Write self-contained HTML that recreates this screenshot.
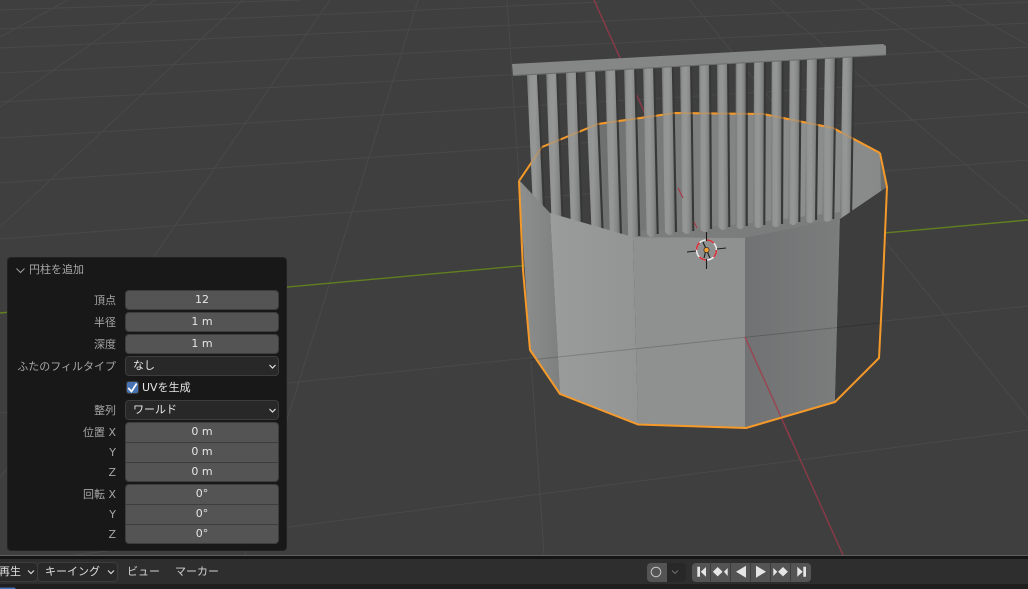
<!DOCTYPE html>
<html lang="ja"><head><meta charset="utf-8"><title>Blender</title>
<style>
*{box-sizing:border-box}
html,body{margin:0;padding:0;width:1028px;height:589px;overflow:hidden;background:#3f3f3f}
body{position:relative;font-family:"DejaVu Sans","Noto Sans CJK JP",sans-serif;font-size:11px}
svg{position:absolute;left:0;top:0}
.a{position:absolute;white-space:nowrap}
#panel{left:7px;top:257px;width:280px;height:294px;background:#181818;border:1px solid #222;border-radius:4px}
.l{position:absolute;right:912px;text-align:right;color:#a6a6a6;font-size:11px;line-height:19px;white-space:nowrap}
.f{position:absolute;left:125px;width:154px;height:20px;background:#545454;border:1px solid #3d3d3d;border-radius:4px;color:#e6e6e6;text-align:center;line-height:18px;font-size:11px}
.g{position:absolute;left:125px;width:154px;background:#545454;border:1px solid #3d3d3d;border-radius:4px;color:#e6e6e6;text-align:center;font-size:11px}
.g div{height:20px;line-height:18px;border-bottom:1px solid #3d3d3d}
.g div:last-child{border-bottom:0}
.s{position:absolute;left:125px;width:154px;height:20px;background:#282828;border:1px solid #3d3d3d;border-radius:4px;color:#e6e6e6;padding-left:7px;line-height:18px;font-size:11px}
.t{position:absolute;color:#d2d2d2;font-size:11px;line-height:18px;white-space:nowrap}
</style></head><body>
<svg width="1028" height="589" viewBox="0 0 1028 589">
<defs>
<linearGradient id="c" x1="0" x2="1" y1="0" y2="0">
<stop offset="0" stop-color="#747676"/><stop offset=".2" stop-color="#929494"/><stop offset=".5" stop-color="#959797"/><stop offset=".8" stop-color="#858787"/><stop offset="1" stop-color="#6c6e6e"/>
</linearGradient>
<linearGradient id="b" gradientUnits="userSpaceOnUse" x1="598" x2="887" y1="0" y2="0">
<stop offset="0" stop-color="#6e6f6f"/><stop offset=".3" stop-color="#7c7d7d"/><stop offset=".7" stop-color="#8c8d8d"/><stop offset="1" stop-color="#888989"/>
</linearGradient>
<linearGradient id="f1" gradientUnits="userSpaceOnUse" x1="520" x2="558" y1="0" y2="0">
<stop offset="0" stop-color="#8d8f8f"/><stop offset="1" stop-color="#7f8181"/>
</linearGradient>
<linearGradient id="f2" gradientUnits="userSpaceOnUse" x1="550" x2="636" y1="0" y2="0">
<stop offset="0" stop-color="#9a9c9c"/><stop offset="1" stop-color="#939595"/>
</linearGradient>
<linearGradient id="f4" gradientUnits="userSpaceOnUse" x1="745" x2="840" y1="0" y2="0">
<stop offset="0" stop-color="#717273"/><stop offset="1" stop-color="#7b7c7c"/>
</linearGradient>
</defs>
<rect width="1028" height="556" fill="#3f3f3f"/>
<g stroke="#494949" stroke-width="1" fill="none">
<path d="M0 239L1028 160M0 183L1028 112M0 138L1028 76M0 102L1028 47M0 73L1028 23M0 48L1028 2M0 29L600 2M0 10L300 0"/>
<path d="M0 413L1028 306M0 565L1028 430"/>
<path d="M507 0L544 555M418 0L245 555M330 0L100 335M243 0L0 227M155 0L0 107M68 0L0 37"/>
<path d="M857 0L1028 107M947 0L1028 45M770 0L1028 217M690 0L1028 418M0 478L7 468"/>
</g>
<path d="M0 313L1028 220" stroke="#617f1f" stroke-width="1.4" fill="none"/>
<path d="M594 0L843 555" stroke="#8a3a48" stroke-width="1.4" fill="none"/>

<polygon points="598,124 675,113 763,114 833,128 880,153 887,187 840,219 745,238 633,237 598,230" fill="url(#b)"/>
<polygon points="880,153 887,187 881,192" fill="#6d6e6e"/>
<polygon points="637,231 720,226 750,223 840,212 840,219 745,238 633,237" fill="#7b7c7c"/>
<polyline points="519,181 542,147 598,124 675,113 763,114 833,128 880,153" fill="none" stroke="#f59a2a" stroke-width="2"/>

<path d="M537.5 70L544 215M556.8 69L562.5 225M576.5 68L581.8 230M595.8 67L602.5 235M615.8 65.5L620.8 238M634.8 64.5L639 236M653.8 63.5L657.5 234M672.5 62.5L675.8 232M690.8 61L693 231M709.8 60L710.8 229M727.8 59L729 227M746.5 58L746.5 226M764.8 57L764 225M782.5 56L781.8 224M800.5 55L799 222M817.8 54L815.8 220M835.8 53L833 219M853.5 52L850.8 217" stroke="#373737" stroke-width="2.6" fill="none"/>
<g fill="url(#c)">
<path d="M526.7 70L533.3 215L543.3 215L536.7 70Z"/>
<path d="M546 69L551.7 225L561.7 225L556 69Z"/>
<path d="M565.7 68L571 230L581 230L575.7 68Z"/>
<path d="M585 67L591.7 235L601.7 235L595 67Z"/>
<path d="M605 65.5L610 238L620 238L615 65.5Z"/>
<path d="M624 64.5L628.3 240L638.3 240L634 64.5Z"/>
<path d="M643 63.5L646.7 234Q651.7 240 656.7 234L653 63.5Z"/>
<path d="M661.7 62.5L665 232Q670 238 675 232L671.7 62.5Z"/>
<path d="M680 61L682.3 231Q687.3 237 692.3 231L690 61Z"/>
<path d="M699 60L700 229Q705 235 710 229L709 60Z"/>
<path d="M717 59L718.3 227Q723.3 233 728.3 227L727 59Z"/>
<path d="M735.7 58L735.7 226Q740.7 232 745.7 226L745.7 58Z"/>
<path d="M754 57L753.3 225Q758.3 231 763.3 225L764 57Z"/>
<path d="M771.7 56L771 224Q776 230 781 224L781.7 56Z"/>
<path d="M789.7 55L788.3 222Q793.3 228 798.3 222L799.7 55Z"/>
<path d="M807 54L805 220Q810 226 815 220L817 54Z"/>
<path d="M825 53L822.3 219Q827.3 225 832.3 219L835 53Z"/>
<path d="M842.7 52L840 217Q845 223 850 217L852.7 52Z"/>
</g>
<path d="M678 188L683 198M694 222L697 228" stroke="#a63c4c" stroke-width="1.2" fill="none"/>
<polyline points="519,181 542,147 598,124 675,113 763,114 833,128 880,153" fill="none" stroke="#f59a2a" stroke-width="2" stroke-opacity=".35"/>
<polygon points="512,64 883,44 886,46 886,55 513,76" fill="#858686"/>
<path d="M513 75.5L886 55" stroke="#6a6b6b" stroke-width="1" fill="none"/>

<polygon points="519,180 550,213 560,394 530,350" fill="url(#f1)"/>
<polygon points="550,213 633,237 638,424 560,394" fill="url(#f2)"/>
<polygon points="633,237 745,238 745,428 638,424" fill="#8f9090"/>
<polygon points="745,238 840,219 835,402 745,428" fill="url(#f4)"/>
<polygon points="840,219 887,187 880,358 835,402" fill="#3d3d3d"/>
<path d="M530 360L880 323" stroke="#000" stroke-opacity=".18" stroke-width="1" fill="none"/>
<path d="M745 337L781 417" stroke="#a23c4a" stroke-opacity=".85" stroke-width="1.4" fill="none"/>
<path d="M781 417L791 440" stroke="#8a3a48" stroke-width="1.4" fill="none"/>
<polyline points="880,153 887,187 883,280 879,358 835,402 746,428 638,424.5 560,394 530,350 523,270 519,181" fill="none" stroke="#f59a2a" stroke-width="2" stroke-linejoin="round"/>

<g fill="none">
<circle cx="706.5" cy="250" r="10" stroke="#e9e9e9" stroke-width="1.6"/>
<circle cx="706.5" cy="250" r="10" stroke="#d9303a" stroke-width="1.6" stroke-dasharray="7.85 7.85"/>
<path d="M706.5 232V241M706.5 259V269M687 252L696 251M717 249L726 248M703 242L710 258M704 258L705.5 252" stroke="#1c1c1c" stroke-width="1.1"/>
</g>
<circle cx="706.5" cy="250" r="2.6" fill="#f5a030" stroke="#2a2a2a" stroke-width=".7"/>

<rect y="555" width="1028" height="1" fill="#5f5f5f"/>
<rect y="556" width="1028" height="3" fill="#151515"/>
<rect y="559" width="1028" height="25" fill="#2e2e2e"/>
<rect y="584" width="1028" height="5" fill="#1f1f1f"/>
<path d="M0 589V587.5H14Q15.5 587.5 15.7 589Z" fill="#4772b3"/>
</svg>

<div id="panel" class="a"></div>
<svg width="1028" height="589" viewBox="0 0 1028 589">
<path d="M16.5 268.5L20.5 272.5L24.5 268.5" stroke="#a0a0a0" stroke-width="1" fill="none"/>
</svg>
<div class="t" style="left:29px;top:261px;color:#a8a8a8">円柱を追加</div>
<div class="l" style="top:291px">頂点</div>
<div class="f" style="top:290px">12</div>
<div class="l" style="top:313px">半径</div>
<div class="f" style="top:312px">1 m</div>
<div class="l" style="top:335px">深度</div>
<div class="f" style="top:334px">1 m</div>
<div class="l" style="top:357px">ふたのフィルタイプ</div>
<div class="s" style="top:356px">なし</div>
<div class="a" style="left:125.5px;top:381px;width:13px;height:13px;background:#4772b3;border-radius:3px;border:1px solid #3d3d3d"></div>
<div class="t" style="left:142px;top:378.5px;color:#e6e6e6">UVを生成</div>
<div class="l" style="top:401px">整列</div>
<div class="s" style="top:400px">ワールド</div>
<svg width="1028" height="589" viewBox="0 0 1028 589">
<path d="M128.3 388L131.5 391.5L136.7 383.5" stroke="#fff" stroke-width="1.7" fill="none"/>
<path d="M269.5 409L272.5 412L275.5 409M269.5 365L272.5 368L275.5 365" stroke="#e0e0e0" stroke-width="1.2" fill="none"/>
</svg>
<div class="l" style="top:423px">位置 X</div>
<div class="l" style="top:442.5px">Y</div>
<div class="l" style="top:462.5px">Z</div>
<div class="g" style="top:422px;height:60px"><div>0 m</div><div>0 m</div><div>0 m</div></div>
<div class="l" style="top:485px">回転 X</div>
<div class="l" style="top:504.5px">Y</div>
<div class="l" style="top:524.5px">Z</div>
<div class="g" style="top:484px;height:60px"><div>0°</div><div>0°</div><div>0°</div></div>

<div class="a" style="left:-6px;top:562px;width:44px;height:20px;background:#282828;border:1px solid #3d3d3d;border-radius:4px"></div>
<div class="a" style="left:37px;top:562px;width:81px;height:20px;background:#282828;border:1px solid #3d3d3d;border-radius:4px"></div>
<div class="t" style="left:-1px;top:563px;color:#e0e0e0">再生</div>
<div class="t" style="left:45px;top:563px;color:#e0e0e0">キーイング</div>
<div class="t" style="left:127px;top:563px">ビュー</div>
<div class="t" style="left:175px;top:563px">マーカー</div>

<div class="a" style="left:646.5px;top:562.5px;width:20px;height:19px;background:#545454;border-radius:4px 0 0 4px"></div>
<div class="a" style="left:666.5px;top:562.5px;width:19px;height:19px;background:#282828;border-radius:0 4px 4px 0"></div>
<div class="a" style="left:691.5px;top:562.5px;width:119px;height:19px;background:#545454;border-radius:4px"></div>
<svg width="1028" height="589" viewBox="0 0 1028 589">
<path d="M28 570.5L31 573.5L34 570.5M108 570.5L111 573.5L114 570.5" stroke="#d8d8d8" stroke-width="1.2" fill="none"/>
<circle cx="656" cy="572" r="4.8" fill="none" stroke="#c4c4c4" stroke-width="1"/>
<path d="M672 570.5L675 573.5L678 570.5" stroke="#6e6e6e" stroke-width="1.1" fill="none"/>
<path d="M710.5 562.5V581.5M730.5 562.5V581.5M750.5 562.5V581.5M770.5 562.5V581.5M790.5 562.5V581.5" stroke="#3d3d3d" stroke-width="1"/>
<g fill="#e6e6e6">
<path d="M697.3 566.7H700V576.7H697.3ZM706 567V576.7L700.7 571.7Z"/>
<path d="M717.7 567L722.6 571.7L717.7 576.4L712.8 571.7ZM727.7 568V576L724 571.7Z"/>
<path d="M746 565.7V577.7L736 571.7Z"/>
<path d="M756 565.7V577.7L766 571.7Z"/>
<path d="M773.3 568V576L777.3 571.7ZM783 567L787.9 571.7L783 576.4L778.1 571.7Z"/>
<path d="M797.3 566.7V576.7L802.7 571.7ZM803.3 566.7H806V576.7H803.3Z"/>
</g>
</svg>
</body></html>
